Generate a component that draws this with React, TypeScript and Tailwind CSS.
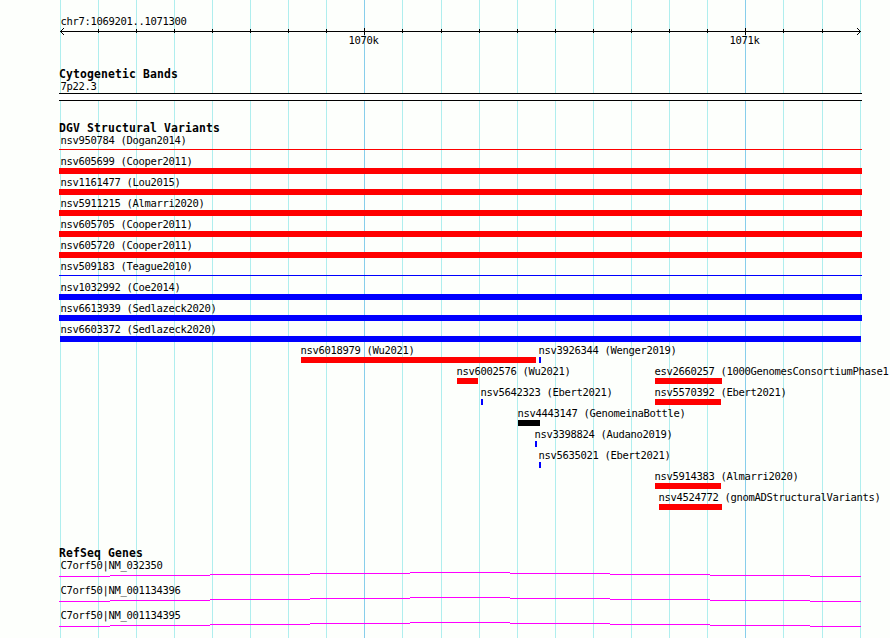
type Feature = { label: string; x: number; w: number; color: string; kind?: "line" };

const RED = "bg-[#ff0000]";
const BLUE = "bg-[#0000ff]";
const BLACK = "bg-black";

// One minor division per entry; the value is the distance to the next grid line.
const divisions = [38, 38, 38, 38, 38, 38, 38, 38, 38, 39, 38, 38, 38, 38, 38, 38, 38, 38, 38, 39, 38, 1];
const majors = [8, 18];

const f = (label: string, x: number, w: number, color: string, kind?: "line"): Feature => ({ label, x, w, color, kind });

const rows: Feature[][] = [
  [f("nsv950784 (Dogan2014)", 59, 803, RED, "line")],
  [f("nsv605699 (Cooper2011)", 59, 803, RED)],
  [f("nsv1161477 (Lou2015)", 59, 803, RED)],
  [f("nsv5911215 (Almarri2020)", 59, 803, RED)],
  [f("nsv605705 (Cooper2011)", 59, 803, RED)],
  [f("nsv605720 (Cooper2011)", 59, 803, RED)],
  [f("nsv509183 (Teague2010)", 59, 803, BLUE, "line")],
  [f("nsv1032992 (Coe2014)", 59, 803, BLUE)],
  [f("nsv6613939 (Sedlazeck2020)", 59, 803, BLUE)],
  [f("nsv6603372 (Sedlazeck2020)", 60, 801, BLUE)],
  [f("nsv6018979 (Wu2021)", 301, 235, RED), f("nsv3926344 (Wenger2019)", 539, 2, BLUE)],
  [f("nsv6002576 (Wu2021)", 457, 21, RED), f("esv2660257 (1000GenomesConsortiumPhase1", 655, 67, RED)],
  [f("nsv5642323 (Ebert2021)", 481, 2, BLUE), f("nsv5570392 (Ebert2021)", 655, 66, RED)],
  [f("nsv4443147 (GenomeinaBottle)", 518, 22, BLACK)],
  [f("nsv3398824 (Audano2019)", 535, 2, BLUE)],
  [f("nsv5635021 (Ebert2021)", 539, 2, BLUE)],
  [f("nsv5914383 (Almarri2020)", 655, 66, RED)],
  [f("nsv4524772 (gnomADStructuralVariants)", 659, 63, RED)],
];

// Intron segments: width and vertical step in pixels.
const intron = [
  [51, 4], [100, 3], [100, 2], [100, 1], [100, 0], [100, 1], [100, 2], [100, 3], [51, 4],
];

function Label({ children, pad = 0 }: { children: string; pad?: number }) {
  return (
    <div
      className="-ml-[0.6px] h-3 whitespace-pre font-['DejaVu_Sans_Mono',monospace] text-[10.5px] leading-3 tracking-[-0.321px] text-black"
      style={{ paddingLeft: pad }}
    >
      {children}
    </div>
  );
}

function Title({ children }: { children: string }) {
  return (
    <h2 className="h-[13px] pl-[59px] whitespace-pre font-['DejaVu_Sans_Mono',monospace] text-[11.4px] leading-[13px] font-bold tracking-[0.137px] text-black">
      {children}
    </h2>
  );
}

function Grid() {
  return (
    <div className="absolute inset-y-0 left-[60px] flex">
      {divisions.map((w, i) => (
        <div
          key={i}
          className={`shrink-0 border-l ${majors.includes(i) ? "border-[#87ceeb]" : "border-[#afeeee]"}`}
          style={{ width: w }}
        />
      ))}
    </div>
  );
}

function Axis() {
  return (
    <svg className="block h-[11px] w-full" viewBox="0 0 890 11" shapeRendering="crispEdges">
      <rect x="60" y="5" width="801" height="1" />
      {divisions.slice(0, -1).map((_, i) => {
        const x = 60 + divisions.slice(0, i).reduce((a, b) => a + b, 0);
        if (i === 0) return null;
        return majors.includes(i) ? (
          <rect key={i} x={x} y="2" width="1" height="7" />
        ) : (
          <rect key={i} x={x} y="3" width="1" height="4" />
        );
      })}
      {[1, 2, 3].map((d) => (
        <g key={d}>
          <rect x={60 + d} y={5 - d} width="1" height="1" />
          <rect x={60 + d} y={5 + d} width="1" height="1" />
          <rect x={860 - d} y={5 - d} width="1" height="1" />
          <rect x={860 - d} y={5 + d} width="1" height="1" />
        </g>
      ))}
    </svg>
  );
}

function FeatureRow({ items }: { items: Feature[] }) {
  return (
    <div className="grid h-[21px] w-[890px]">
      {items.map((it) => (
        <div key={it.label} className="col-start-1 row-start-1" style={{ paddingLeft: it.x }}>
          <Label pad={it.x < 61 ? 61 - it.x : 0}>{it.label}</Label>
          <div
            className={`${it.color} ${it.kind === "line" ? "mt-[3px] h-px" : "mt-px h-1.5"}`}
            style={{ width: it.w }}
          />
        </div>
      ))}
    </div>
  );
}

function Gene({ name }: { name: string }) {
  return (
    <div className="h-[25px]">
      <Label pad={61}>{name}</Label>
      <div className="flex pt-px pl-[59px]">
        {intron.map(([w, y], i) => (
          <div key={i} className="shrink-0" style={{ width: w, paddingTop: y }}>
            <div className="h-px bg-[#ff00ff]" />
          </div>
        ))}
      </div>
    </div>
  );
}

export default function App() {
  return (
    <main className="relative h-[638px] w-[890px] overflow-hidden bg-[#fdfffc]">
      <Grid />
      <div className="relative flex flex-col">
        <header className="h-[68px] pt-[15px]">
          <Label pad={61}>chr7:1069201..1071300</Label>
          <div className="-mt-px">
            <Axis />
          </div>
          <div className="-mt-[3px] flex">
            <div className="w-[381px] shrink-0">
              <Label pad={349}>1070k</Label>
            </div>
            <Label pad={349}>1071k</Label>
          </div>
        </header>
        <section className="h-[54px]">
          <Title>Cytogenetic Bands</Title>
          <div className="-mt-px">
            <Label pad={61}>7p22.3</Label>
          </div>
          <div className="mt-px ml-[59px] h-2 w-[803px] border-y border-black bg-white" />
        </section>
        <section className="h-[425px]">
          <Title>DGV Structural Variants</Title>
          <div className="-mt-px">
            {rows.map((items, i) => (
              <FeatureRow key={i} items={items} />
            ))}
          </div>
        </section>
        <section>
          <Title>RefSeq Genes</Title>
          <div className="-mt-px">
            <Gene name="C7orf50|NM_032350" />
            <Gene name="C7orf50|NM_001134396" />
            <Gene name="C7orf50|NM_001134395" />
          </div>
        </section>
      </div>
    </main>
  );
}
